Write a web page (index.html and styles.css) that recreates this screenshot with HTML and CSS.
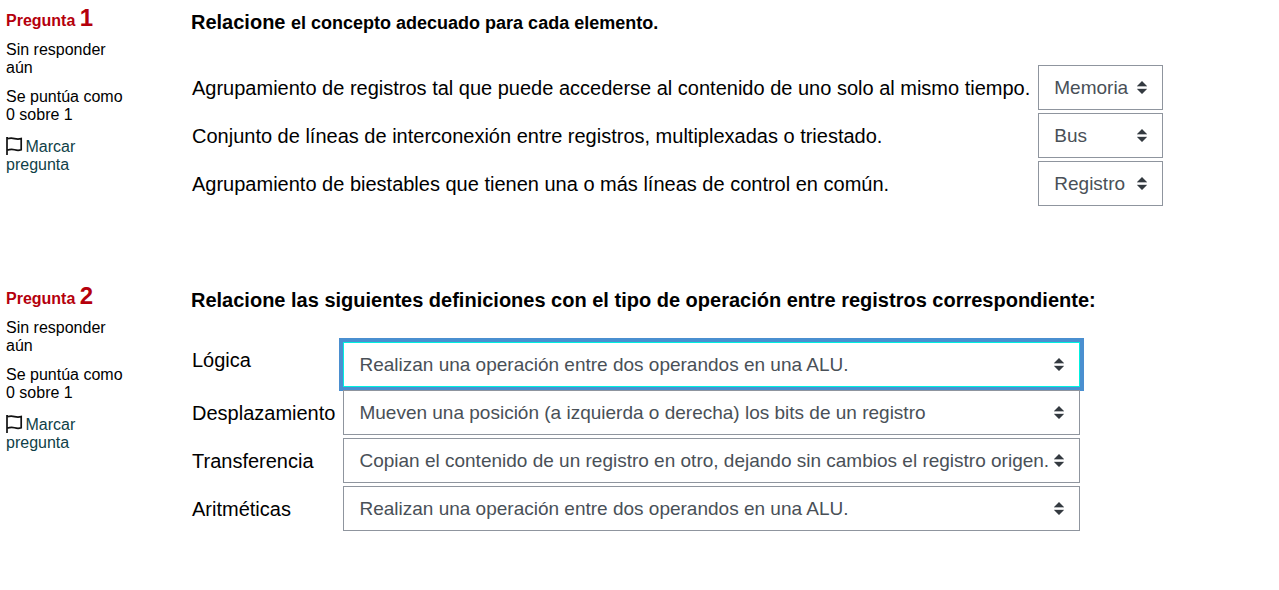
FILE: index.html
```html
<!DOCTYPE html>
<html lang="es">
<head>
<meta charset="utf-8">
<title>Cuestionario</title>
<link rel="stylesheet" href="styles.css">
</head>
<body>
<svg class="defs" aria-hidden="true">
  <symbol id="arrows" viewBox="0 0 10 13"><path d="M0 5 5 0l5 5zM0 8h10l-5 5z" fill="#343a40"/><path d="M0 5h10v1H0zM0 7.500h10v.5H0z" fill="#b8babd"/></symbol>
  <symbol id="flag" viewBox="0 0 17 18"><path d="M1 0v18M1 1.800C4 1 6 1 8.500 1.600S13 2.200 15.200 1.600V12.800C13 13.600 11 13.500 8.500 12.800S4 12.200 1 13.300" fill="none" stroke="#111" stroke-width="1.700"/></symbol>
</svg>
<main class="quiz">
  <section class="question">
    <aside class="info">
      <h3 class="number">Pregunta <span class="digit">1</span></h3>
      <p class="state">Sin responder aún</p>
      <p class="grade">Se puntúa como 0 sobre 1</p>
      <a class="mark" href="#"><svg class="flag" aria-hidden="true"><use href="#flag"/></svg> Marcar pregunta</a>
    </aside>
    <div class="content">
      <p class="prompt">Relacione <span class="small">el concepto adecuado para cada elemento.</span></p>
      <div class="answers">
        <label class="term" for="a1">Agrupamiento de registros tal que puede accederse al contenido de uno solo al mismo tiempo.</label>
        <div class="pick"><select id="a1"><option>Memoria</option></select><svg class="arrows" aria-hidden="true"><use href="#arrows"/></svg></div>
        <label class="term" for="a2">Conjunto de líneas de interconexión entre registros, multiplexadas o triestado.</label>
        <div class="pick"><select id="a2"><option>Bus</option></select><svg class="arrows" aria-hidden="true"><use href="#arrows"/></svg></div>
        <label class="term" for="a3">Agrupamiento de biestables que tienen una o más líneas de control en común.</label>
        <div class="pick"><select id="a3"><option>Registro</option></select><svg class="arrows" aria-hidden="true"><use href="#arrows"/></svg></div>
      </div>
    </div>
  </section>
  <section class="question">
    <aside class="info">
      <h3 class="number">Pregunta <span class="digit">2</span></h3>
      <p class="state">Sin responder aún</p>
      <p class="grade">Se puntúa como 0 sobre 1</p>
      <a class="mark" href="#"><svg class="flag" aria-hidden="true"><use href="#flag"/></svg> Marcar pregunta</a>
    </aside>
    <div class="content">
      <p class="prompt">Relacione las siguientes definiciones con el tipo de operación entre registros correspondiente:</p>
      <div class="answers">
        <label class="term raised" for="b1">Lógica</label>
        <div class="pick"><select id="b1" class="active"><option>Realizan una operación entre dos operandos en una ALU.</option></select><svg class="arrows" aria-hidden="true"><use href="#arrows"/></svg></div>
        <label class="term" for="b2">Desplazamiento</label>
        <div class="pick"><select id="b2"><option>Mueven una posición (a izquierda o derecha) los bits de un registro</option></select><svg class="arrows" aria-hidden="true"><use href="#arrows"/></svg></div>
        <label class="term" for="b3">Transferencia</label>
        <div class="pick"><select id="b3"><option>Copian el contenido de un registro en otro, dejando sin cambios el registro origen.</option></select><svg class="arrows" aria-hidden="true"><use href="#arrows"/></svg></div>
        <label class="term" for="b4">Aritméticas</label>
        <div class="pick"><select id="b4"><option>Realizan una operación entre dos operandos en una ALU.</option></select><svg class="arrows" aria-hidden="true"><use href="#arrows"/></svg></div>
      </div>
    </div>
  </section>
</main>
</body>
</html>
```
FILE: styles.css
```css
* { box-sizing: border-box; }
body {
  margin: 0;
  background: #fff;
  color: #000;
  font-family: "Liberation Sans", Arial, sans-serif;
  font-size: 20px;
}
.defs { display: none; }
.quiz {
  display: flex;
  flex-direction: column;
  gap: 78px;
  padding: 6px;
}
.question {
  display: grid;
  grid-template-columns: 120px 1fr;
  gap: 65px;
}
.info {
  font-size: 16px;
  line-height: 18px;
}
.number {
  margin: 0 0 8px;
  color: #b5000c;
  font-size: 16px;
  line-height: 24px;
}
.digit { font-size: 24px; }
.state, .grade { margin: 0 0 11px; }
.mark {
  display: block;
  padding-top: 2px;
  color: #0f3f48;
  text-decoration: none;
}
.flag {
  width: 17px;
  height: 18px;
  margin-right: -2px;
  vertical-align: -3px;
}
.prompt {
  margin: 4px 0 30px;
  font-weight: bold;
  line-height: 24px;
}
.small { font-size: 18px; }
.answers {
  display: grid;
  grid-template-columns: max-content max-content;
  column-gap: 8px;
  row-gap: 3px;
  padding-left: 1px;
}
.term {
  align-self: center;
  line-height: 24px;
}
.raised {
  align-self: start;
  padding-top: 6px;
}
.pick {
  display: grid;
  align-items: center;
  min-width: 125px;
}
.pick > * { grid-area: 1 / 1; }
select {
  appearance: none;
  width: 100%;
  height: 45px;
  margin: 0;
  padding: 0 30px 0 15px;
  border: 1px solid #8f959e;
  border-radius: 0;
  outline: none;
  background: #fff;
  color: #495057;
  font-family: inherit;
  font-size: 19px;
}
.active {
  border-color: #00f0e0;
  box-shadow: 0 0 0 4px #4a8fd0;
}
.arrows {
  justify-self: end;
  width: 10px;
  height: 13px;
  margin-right: 16px;
  pointer-events: none;
}
```
